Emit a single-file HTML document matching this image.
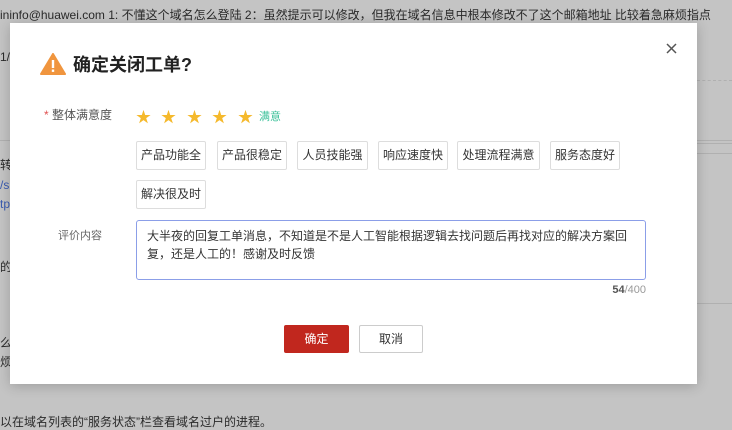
<!DOCTYPE html>
<html><head><meta charset="utf-8"><style>
*{margin:0;padding:0;box-sizing:border-box}
body{width:732px;height:430px;overflow:hidden;background:#c4c4c4;font-family:"Liberation Sans","Noto Sans CJK SC",sans-serif;position:relative;color:#333}
.bg{position:absolute;font-size:12px;color:#2a2a2a;white-space:nowrap}
.modal{position:absolute;left:10px;top:23px;width:687px;height:361px;background:#fff;box-shadow:0 2px 12px rgba(0,0,0,.2)}
.a{position:absolute}
.tag{position:absolute;height:29px;border:1px solid #ddd;border-radius:2px;font-size:12px;line-height:27px;text-align:center;color:#333}
.star{position:absolute;top:106px;color:#f5b92c;font-size:15px}
</style></head><body>
<div class="bg" style="left:0;top:6px">ininfo@huawei.com 1: 不懂这个域名怎么登陆 2：虽然提示可以修改，但我在域名信息中根本修改不了这个邮箱地址 比较着急麻烦指点</div>
<div class="bg" style="left:0;top:50px">1/</div>
<div class="bg" style="left:0;top:156px">转</div>
<div class="bg" style="left:0;top:178px;color:#3a5bb0">/s</div>
<div class="bg" style="left:0;top:197px;color:#3a5bb0">tp</div>
<div class="bg" style="left:0;top:258px">的</div>
<div class="bg" style="left:0;top:334px">么</div>
<div class="bg" style="left:0;top:353px">烦</div>
<div class="bg" style="left:0;top:413px">以在域名列表的“服务状态”栏查看域名过户的进程。</div>
<div class="a" style="left:0;top:140px;width:732px;border-top:1px solid #b0b0b0"></div>
<div class="a" style="left:697px;top:80px;width:35px;border-top:1px dashed #b0b0b0"></div>
<div class="a" style="left:697px;top:143px;width:35px;border-top:1px solid #b0b0b0"></div>
<div class="a" style="left:697px;top:153px;width:35px;border-top:1px solid #b0b0b0"></div>
<div class="a" style="left:697px;top:303px;width:35px;border-top:1px solid #b0b0b0"></div>
<div class="modal"></div>
<svg class="a" style="left:40px;top:53px" width="26" height="22" viewBox="0 0 26 22"><path d="M13 1 L25 21 L1 21 Z" fill="#f0953e" stroke="#f0953e" stroke-linejoin="round" stroke-width="2"/><rect x="11.8" y="7" width="2.4" height="8" fill="#fff"/><rect x="11.8" y="16.5" width="2.4" height="2.4" fill="#fff"/></svg>
<div class="a" style="left:73px;top:51px;font-size:18px;font-weight:bold;color:#222">确定关闭工单?</div>
<svg class="a" style="left:666px;top:43px" width="11" height="11" viewBox="0 0 11 11"><path d="M1 1L10 10M10 1L1 10" stroke="#555" stroke-width="1.5"/></svg>
<div class="a" style="left:44px;top:106px;font-size:12px;color:#555"><span style="color:#e05050">*</span> 整体满意度</div>
<div class="star" style="left:136px">★</div><div class="star" style="left:161px">★</div><div class="star" style="left:187px">★</div><div class="star" style="left:212px">★</div><div class="star" style="left:238px">★</div>
<div class="a" style="left:259px;top:108px;font-size:11px;color:#3cc19a">满意</div>
<div class="tag" style="left:136px;top:141px;width:70px">产品功能全</div>
<div class="tag" style="left:217px;top:141px;width:70px">产品很稳定</div>
<div class="tag" style="left:297px;top:141px;width:71px">人员技能强</div>
<div class="tag" style="left:378px;top:141px;width:70px">响应速度快</div>
<div class="tag" style="left:457px;top:141px;width:83px">处理流程满意</div>
<div class="tag" style="left:550px;top:141px;width:70px">服务态度好</div>
<div class="tag" style="left:136px;top:180px;width:70px">解决很及时</div>
<div class="a" style="left:58px;top:227px;font-size:11px;color:#666">评价内容</div>
<div class="a" style="left:136px;top:220px;width:510px;height:60px;border:1px solid #8b9ee8;border-radius:3px;padding:6px 10px;font-size:12px;line-height:18px;color:#333">大半夜的回复工单消息，不知道是不是人工智能根据逻辑去找问题后再找对应的解决方案回复，还是人工的！感谢及时反馈</div>
<div class="a" style="left:600px;top:284px;width:46px;text-align:right;font-size:11px;color:#999"><b style="color:#555">54</b>/400</div>
<div class="a" style="left:284px;top:325px;width:65px;height:28px;background:#c1271e;border-radius:2px;color:#fff;font-size:12px;line-height:28px;text-align:center">确定</div>
<div class="a" style="left:359px;top:325px;width:64px;height:28px;border:1px solid #ccc;border-radius:2px;color:#333;font-size:12px;line-height:26px;text-align:center">取消</div>
</body></html>
